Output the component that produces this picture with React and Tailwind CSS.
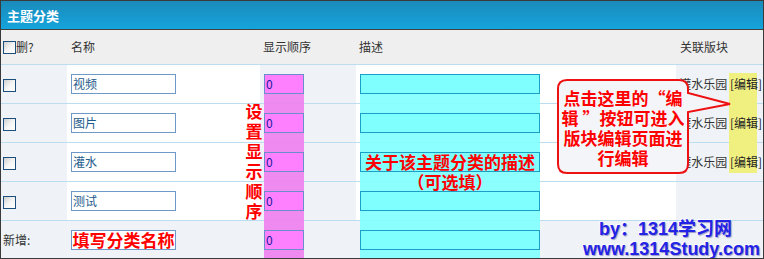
import React from "react";

const CB = () => (
  <div className="w-[13px] h-[13px] border border-[#1c4f7e] bg-linear-to-br from-[#cfcfcf] via-[#f4f4f4] to-white" />
);

const rows = ["视频", "图片", "灌水", "测试"];

export default function App() {
  return (
    <div className="relative w-[764px] h-[259px] border border-[#3a3a3a] bg-white font-['Noto_Sans_CJK_SC',sans-serif] text-[12px] text-[#333] overflow-hidden">
      {/* title bar */}
      <div className="h-[28px] bg-linear-to-b from-[#1a8bbb] to-[#14a4dc] flex items-center pl-[6px] text-white font-bold text-[13px] leading-none">
        主题分类
      </div>
      <div className="h-[1px] bg-[#404040]" />
      {/* header row */}
      <div className="h-[35px] bg-[#efefef] border-b border-[#bcdcf0] grid grid-cols-[66px_193px_96px_320px_87px] items-center leading-none">
        <div className="flex items-center pl-[2px]">
          <CB />
          <span>删?</span>
        </div>
        <div className="pl-[4px]">名称</div>
        <div className="pl-[3px]">显示顺序</div>
        <div className="pl-[3px]">描述</div>
        <div className="pl-[4px]">关联版块</div>
      </div>
      {/* data rows */}
      {rows.map((name, i) => (
        <div
          key={name}
          className="h-[39px] border-b border-[#bcdcf0] grid grid-cols-[66px_193px_96px_320px_87px]"
        >
          <div className="bg-[#eff3f7] flex items-center pl-[2px] pt-[2px]">
            <CB />
          </div>
          <div className="bg-white flex items-center pl-[4px]">
            <div className="relative z-[2] w-[105px] h-[20px] border border-[#6e98c8] bg-white text-[#1d5a8c] flex items-center pl-[1px] leading-none">
              {name}
            </div>
          </div>
          <div className="bg-[#eff3f7] flex items-center pl-[4px]">
            <div className="relative z-[2] w-[40px] h-[20px] border border-[#6a8dcc] bg-[#ff80ff] text-[#1a1aa0] flex items-center pl-[1px] leading-none">
              0
            </div>
          </div>
          <div className="bg-white flex items-center pl-[4px]">
            <div className="relative z-[2] w-[180px] h-[20px] border border-[#1aa0c8] bg-[#80ffff]" />
          </div>
          <div className="bg-[#eff3f7] flex items-center justify-end pr-[1px] whitespace-nowrap leading-none">
            {i < 3 && (
              <span className="relative z-[2]">
                灌水乐园 <span className="text-[#222]">[编辑]</span>
              </span>
            )}
          </div>
        </div>
      ))}
      {/* new row */}
      <div className="h-[37px] bg-[#eff3f7] grid grid-cols-[66px_193px_96px_320px_87px]">
        <div className="flex items-center pl-[2px] leading-none">新增:</div>
        <div className="flex items-center pl-[4px]">
          <div className="relative z-[2] w-[105px] h-[20px] border border-[#6e98c8] bg-white text-[#ff0000] font-bold text-[17px] flex items-center justify-center leading-none">
            填写分类名称
          </div>
        </div>
        <div className="flex items-center pl-[4px]">
          <div className="relative z-[2] w-[40px] h-[20px] border border-[#6a8dcc] bg-[#ff80ff] text-[#1a1aa0] flex items-center pl-[1px] leading-none">
            0
          </div>
        </div>
        <div className="flex items-center pl-[4px]">
          <div className="relative z-[2] w-[180px] h-[20px] border border-[#1aa0c8] bg-[#80ffff]" />
        </div>
        <div />
      </div>

      {/* highlight strips */}
      <div className="absolute z-[1] left-[263px] top-[73px] w-[40px] h-[185px] bg-[#ee80ee]/90" />
      <div className="absolute z-[1] left-[359px] top-[73px] w-[180px] h-[185px] bg-[#80ffff]/90" />
      <div className="absolute z-[1] left-[728px] top-[72px] w-[28px] h-[100px] bg-[#f0f080]" />

      {/* vertical annotation */}
      <div className="absolute z-[3] left-[244px] top-[100px] w-[18px] text-[17px] leading-[20px] font-bold text-[#ff0000] text-center">
        设<br />置<br />显<br />示<br />顺<br />序
      </div>

      {/* description annotation */}
      <div className="absolute z-[3] left-[359px] top-[151px] w-[180px] text-[17px] leading-[20px] font-bold text-[#ff0000] text-center whitespace-nowrap">
        关于该主题分类的描述
        <br />
        （可选填）
      </div>

      {/* callout */}
      <div className="absolute z-[5] left-[555px] top-[77px] w-[178px] h-[98px]">
        <svg width="178" height="98" viewBox="0 0 178 98" className="absolute inset-0">
          <path
            d="M 11 2 H 123 Q 132 2 132 11 V 15 L 174 26 L 132 34 V 86 Q 132 95 123 95 H 11 Q 2 95 2 86 V 11 Q 2 2 11 2 Z"
            fill="#f3f5f8"
            stroke="#ee1111"
            strokeWidth="2"
          />
        </svg>
        <div className="absolute left-[2px] top-[10px] w-[130px] text-[17px] leading-[20px] font-bold text-[#ff0000] text-center whitespace-nowrap">
          点击这里的“编
          <br />
          辑 ”按钮可进入
          <br />
          版块编辑页面进
          <br />
          行编辑
        </div>
      </div>

      {/* watermark */}
      <div className="absolute z-[3] left-[598px] top-[218px] text-[18px] leading-[20px] font-bold text-[#2323e6] font-['Liberation_Sans','Noto_Sans_CJK_SC',sans-serif] whitespace-nowrap [text-shadow:1px_1px_1px_#9a9ac8,-1px_-1px_0_#ffffff]">
        by：1314学习网
      </div>
      <div className="absolute z-[3] left-[582px] top-[238px] text-[18px] leading-[20px] font-bold text-[#2323e6] font-['Liberation_Sans',sans-serif] whitespace-nowrap [text-shadow:1px_1px_1px_#9a9ac8,-1px_-1px_0_#ffffff]">
        www.1314Study.com
      </div>
    </div>
  );
}
